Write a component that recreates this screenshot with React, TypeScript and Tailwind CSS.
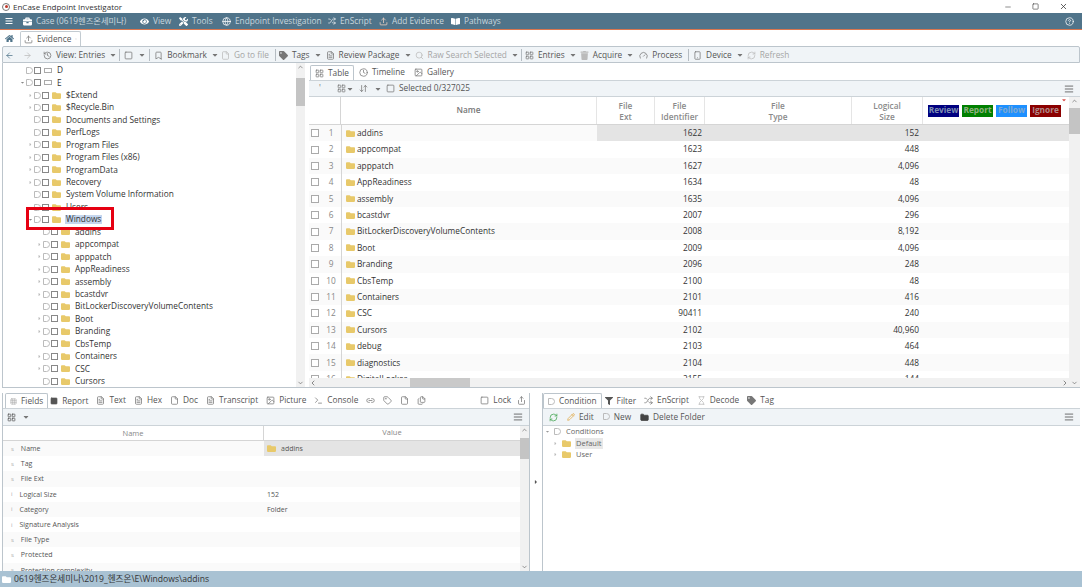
import {
  AlignJustify, ArrowLeft, ArrowRight, Bookmark, ArrowDownUp, ChevronDown, ChevronLeft, ChevronRight, ChevronUp,
  Clock, CircleHelp, File, FileText, Folder, Gauge, Grid3x3, History, Image, LayoutGrid, Minus,
  Pencil, RefreshCw, Search, Square, Tag, Terminal, X, Globe, Smartphone, Upload, Shuffle, Hourglass, Link2, Files, Share,
} from "lucide-react";
import { FaFolder, FaHome, FaTag, FaBars, FaCaretDown, FaCaretRight, FaBookOpen, FaEye, FaTools, FaBriefcase, FaFilter, FaTrash } from "react-icons/fa";

const font = "font-['Open_Sans','Noto_Sans_CJK_KR',sans-serif]";

const tree: [string, number, boolean?][] = [
  ["D", 0], ["E", 0], ["$Extend", 1], ["$Recycle.Bin", 1], ["Documents and Settings", 1], ["PerfLogs", 1],
  ["Program Files", 1], ["Program Files (x86)", 1], ["ProgramData", 1], ["Recovery", 1], ["System Volume Information", 1],
  ["Users", 1], ["Windows", 1, true], ["addins", 2], ["appcompat", 2], ["apppatch", 2], ["AppReadiness", 2], ["assembly", 2],
  ["bcastdvr", 2], ["BitLockerDiscoveryVolumeContents", 2], ["Boot", 2], ["Branding", 2], ["CbsTemp", 2], ["Containers", 2],
  ["CSC", 2], ["Cursors", 2],
];

// rows of the tree that have an expander in front of them
const closed = ["$Extend", "$Recycle.Bin", "Program Files", "Program Files (x86)", "ProgramData", "Recovery", "appcompat", "apppatch", "AppReadiness", "assembly", "bcastdvr", "Boot", "Branding", "Containers", "CSC"];
const open = ["E", "Windows"];

const rows: [string, string, string][] = [
  ["addins", "1622", "152"], ["appcompat", "1623", "448"], ["apppatch", "1627", "4,096"], ["AppReadiness", "1634", "48"],
  ["assembly", "1635", "4,096"], ["bcastdvr", "2007", "296"], ["BitLockerDiscoveryVolumeContents", "2008", "8,192"],
  ["Boot", "2009", "4,096"], ["Branding", "2096", "248"], ["CbsTemp", "2100", "48"], ["Containers", "2101", "416"],
  ["CSC", "90411", "240"], ["Cursors", "2102", "40,960"], ["debug", "2103", "464"], ["diagnostics", "2104", "448"],
  ["DigitalLocker", "2155", "144"],
];

const fields: [string, string][] = [
  ["Name", "addins"], ["Tag", ""], ["File Ext", ""], ["Logical Size", "152"], ["Category", "Folder"],
  ["Signature Analysis", ""], ["File Type", ""], ["Protected", ""], ["Protection complexity", ""],
];

function Yellow() {
  return <FaFolder className="w-[9px] h-[9px] text-[#e8c96a] shrink-0" />;
}

function Box() {
  return <span className="w-[7px] h-[7px] border border-[#888] bg-white shrink-0" />;
}

function Drive() {
  return <span className="w-[7px] h-[7px] rounded-r-full border border-[#bbb] shrink-0" />;
}

function Caret({ className = "" }: { className?: string }) {
  return <FaCaretDown className={`w-[8px] h-[8px] text-[#777] shrink-0 ${className}`} />;
}

function Sep({ className = "" }: { className?: string }) {
  return <span className={`w-px h-[12px] bg-[#b5bcc2] shrink-0 ${className}`} />;
}

function NavItem({ icon, label, w }: { icon: React.ReactNode; label: string; w: string }) {
  return (
    <span className={`flex items-center gap-[4px] shrink-0 ${w}`}>
      {icon}
      <span className="whitespace-nowrap">{label}</span>
    </span>
  );
}

function Tool({ icon, label, off, caret, className = "" }: { icon: React.ReactNode; label: string; off?: boolean; caret?: boolean; className?: string }) {
  return (
    <span className={`flex items-center gap-[4px] whitespace-nowrap shrink-0 ${off ? "text-[#a5a5a5]" : "text-[#555]"} ${className}`}>
      {icon}
      {label}
      {caret && <Caret />}
    </span>
  );
}

function TreeRow({ label, depth, picked }: { label: string; depth: number; picked?: boolean }) {
  const drive = depth === 0;
  return (
    <div className={`relative h-[12.45px] flex items-center gap-[1px] shrink-0 whitespace-nowrap ${depth === 0 ? "pl-[23px]" : depth === 1 ? "pl-[31px]" : "pl-[40px]"}`}>
      {closed.includes(label) && <FaCaretRight className="w-[5px] h-[5px] text-[#bbb] -ml-[6px] shrink-0" />}
      {open.includes(label) && <FaCaretDown className="w-[5px] h-[5px] text-[#888] -ml-[6px] shrink-0" />}
      <Drive />
      <Box />
      <span className="w-px" />
      {drive ? <span className="w-[8px] h-[5px] border border-[#aaa] shrink-0" /> : <Yellow />}
      <span className={`ml-[3px] px-[1px] text-[#333] ${picked ? "bg-[#c5d6ee]" : ""}`}>{label}</span>
    </div>
  );
}

function Bar({ thumb, w = "w-[9px]" }: { thumb: string; w?: string }) {
  return (
    <div className={`${w} shrink-0 bg-[#f1f1f1] flex flex-col items-center`}>
      <ChevronUp className="w-[7px] h-[8px] text-[#555] shrink-0" />
      <div className={`w-full bg-[#c4c4c4] ${thumb}`} />
      <div className="flex-1" />
      <ChevronDown className="w-[7px] h-[8px] text-[#555] shrink-0" />
    </div>
  );
}

function Tab({ label, icon, on }: { label: string; icon: React.ReactNode; on?: boolean }) {
  return (
    <span className={`flex items-center gap-[4px] h-[15px] px-[4px] whitespace-nowrap shrink-0 text-[#555] ${on ? "border border-b-0 border-[#bcc5cc] rounded-t-[2px] bg-white" : ""}`}>
      {icon}
      {label}
    </span>
  );
}

const smIcon = "w-[9px] h-[9px] text-[#777] shrink-0";
const offIcon = "w-[9px] h-[9px] text-[#bbb] shrink-0";

export default function App() {
  return (
    <div className={`w-[1082px] h-[587px] overflow-hidden bg-white flex flex-col text-[8.3px] leading-none ${font}`}>
      {/* title bar */}
      <div className="h-[13px] flex items-center pl-[2px] pr-[14px] text-[#333] text-[8px] shrink-0">
        <span className="w-[8px] h-[8px] rounded-full border border-[#777] mr-[3px] flex items-center justify-center">
          <span className="w-[3px] h-[3px] rounded-full bg-[#c0392b]" />
        </span>
        EnCase Endpoint Investigator
        <span className="flex-1" />
        <Minus className="w-[8px] h-[8px] text-[#555] mr-[20px]" />
        <Square className="w-[7px] h-[7px] text-[#333] mr-[20px]" />
        <X className="w-[9px] h-[9px] text-[#333]" />
      </div>

      {/* nav */}
      <div className="h-[17px] bg-[#50748a] border-b border-[#d9764f] flex items-center pl-[5px] pr-[8px] text-[#c9d6de] shrink-0">
        <FaBars className="w-[8px] h-[8px] text-white mr-[10px]" />
        <NavItem w="w-[117px]" icon={<FaBriefcase className="w-[9px] h-[9px] text-white" />} label="Case (0619헨즈온세미나)" />
        <NavItem w="w-[39px]" icon={<FaEye className="w-[9px] h-[9px] text-white" />} label="View" />
        <NavItem w="w-[43px]" icon={<FaTools className="w-[9px] h-[9px] text-white" />} label="Tools" />
        <NavItem w="w-[106px]" icon={<Globe className="w-[9px] h-[9px] text-white" />} label="Endpoint Investigation" />
        <NavItem w="w-[51px]" icon={<Shuffle className="w-[8px] h-[8px] text-white" />} label="EnScript" />
        <NavItem w="w-[72px]" icon={<Upload className="w-[9px] h-[9px] text-[#f1d4c4]" />} label="Add Evidence" />
        <NavItem w="w-[60px]" icon={<FaBookOpen className="w-[9px] h-[9px] text-white" />} label="Pathways" />
        <span className="flex-1" />
        <CircleHelp className="w-[9px] h-[9px] text-white" />
      </div>

      {/* page tabs */}
      <div className="h-[16px] flex items-end pl-[5px] gap-[6px] shrink-0 text-[#555]">
        <FaHome className="w-[9px] h-[9px] text-[#50748a] mb-[3px]" />
        <span className="h-[15px] w-[61px] border border-b-0 border-[#c3cbd1] rounded-t-[2px] flex items-center gap-[4px] px-[3px]">
          <Upload className={smIcon} />
          Evidence
          <X className="w-[6px] h-[6px] text-[#777] ml-auto" />
        </span>
      </div>

      {/* toolbar */}
      <div className="h-[17px] mx-[2px] border border-[#bcc5cc] rounded-t-[2px] bg-[#f0f4f7] flex items-center pl-[2px] pt-[1px] shrink-0">
        <ArrowLeft className="w-[9px] h-[9px] text-[#50748a] shrink-0" />
        <ArrowRight className="w-[9px] h-[9px] text-[#bbb] ml-[9px] shrink-0" />
        <Tool className="ml-[11px]" icon={<History className={smIcon} />} label="View: Entries" caret />
        <Sep className="ml-[2px]" />
        <Square className={`${smIcon} ml-[4px]`} />
        <Caret className="ml-[5px]" />
        <Sep className="ml-[3px]" />
        <Tool className="ml-[4px]" icon={<Bookmark className={smIcon} />} label="Bookmark" caret />
        <Tool className="ml-[2px]" off icon={<File className={offIcon} />} label="Go to file" />
        <Sep className="ml-[6px]" />
        <Tool className="ml-[3px]" icon={<FaTag className={smIcon} />} label="Tags" caret />
        <Tool className="ml-[4px]" icon={<FileText className={smIcon} />} label="Review Package" caret />
        <Tool className="ml-[3px]" off icon={<Search className={offIcon} />} label="Raw Search Selected" caret />
        <Sep className="ml-[2px]" />
        <Tool className="ml-[3px]" icon={<LayoutGrid className={smIcon} />} label="Entries" caret />
        <Tool className="ml-[3px]" icon={<FaTrash className={offIcon} />} label="Acquire" caret />
        <Tool className="ml-[5px]" icon={<Gauge className={smIcon} />} label="Process" />
        <Sep className="ml-[6px]" />
        <Tool className="ml-[4px]" icon={<Smartphone className={smIcon} />} label="Device" caret />
        <Tool className="ml-[3px]" off icon={<RefreshCw className={offIcon} />} label="Refresh" />
      </div>

      {/* upper panes */}
      <div className="h-[325px] flex mx-[2px] gap-[4px] shrink-0 border-b border-[#bcc5cc]">
        <div className="relative w-[303px] flex border-l border-[#bcc5cc] overflow-hidden shrink-0">
          <div className="flex-1 flex flex-col pt-[1px] overflow-hidden text-[#333]">
            {tree.map(([label, depth, picked]) => (
              <TreeRow key={label} label={label} depth={depth} picked={picked} />
            ))}
          </div>
          <Bar thumb="mt-[7px] h-[28px]" />
          <div className="absolute left-[23px] top-[144px] w-[88px] h-[23px] border-[3px] border-[#e60012]" />
        </div>

        <div className="flex-1 min-w-0 flex flex-col">
          <div className="h-[17px] flex items-end pl-[1px] gap-[1px] shrink-0">
            <Tab on label="Table" icon={<LayoutGrid className={smIcon} />} />
            <Tab label="Timeline" icon={<Clock className={smIcon} />} />
            <Tab label="Gallery" icon={<Image className={smIcon} />} />
          </div>
          <div className="h-[17px] bg-[#f0f4f7] border-y border-[#ccd3d8] flex items-center pl-[10px] pr-[6px] shrink-0 text-[#555]">
            <span className="w-[18px] text-[#777]">'</span>
            <LayoutGrid className={smIcon} />
            <Caret />
            <ArrowDownUp className={`${smIcon} ml-[5px]`} />
            <Caret className="ml-[6px]" />
            <Square className={`${smIcon} ml-[4px]`} />
            <span className="ml-[4px]">Selected 0/327025</span>
            <AlignJustify className="w-[10px] h-[10px] text-[#555] ml-auto" />
          </div>
          <div className="flex-1 min-h-0 flex">
            <div className="flex-1 min-w-0 flex flex-col overflow-hidden">
              <div className="relative h-[28px] flex shrink-0 border-b border-[#d5d5d5] text-[#8a8a8a] font-semibold text-center">
                <span className="w-[32px] border-r border-[#d5d5d5]" />
                <span className="w-[256px] border-r border-[#e5e5e5] flex items-center justify-center text-[#777]">Name</span>
                <span className="w-[58px] border-r border-[#e5e5e5] flex items-center justify-center leading-[11px]">File<br />Ext</span>
                <span className="w-[50px] border-r border-[#e5e5e5] flex items-center justify-center leading-[11px]">File<br />Identifier</span>
                <span className="w-[147px] border-r border-[#e5e5e5] flex items-center justify-center leading-[11px]">File<br />Type</span>
                <span className="w-[71px] border-r border-[#e5e5e5] flex items-center justify-center leading-[11px]">Logical<br />Size</span>
                <span className="flex-1 flex items-center gap-[3px] pl-[5px] font-bold">
                  <span className="w-[31px] h-[12px] bg-[#000080] text-[#7f8fb0] flex items-center justify-center">Review</span>
                  <span className="w-[31px] h-[12px] bg-[#008000] text-[#8fb07f] flex items-center justify-center">Report</span>
                  <span className="w-[31px] h-[12px] bg-[#1e90ff] text-[#7fa9d0] flex items-center justify-center">Follow</span>
                  <span className="w-[31px] h-[12px] bg-[#8b0000] text-[#b08a8a] flex items-center justify-center">Ignore</span>
                </span>
                <FaCaretDown className="absolute right-[2px] top-0 w-[6px] h-[6px] text-[#d9534f]" />
              </div>
              <div className="flex-1 min-h-0 overflow-hidden">
                {rows.map(([name, id, size], i) => (
                  <div key={name} className={`h-[16.4px] flex items-center text-[#333] ${i % 2 === 0 ? "bg-[#fafafa]" : "bg-white"}`}>
                    <span className="w-[15px] pl-[2px] flex shrink-0"><span className="w-[8px] h-[8px] border border-[#aaa] bg-white" /></span>
                    <span className="w-[17px] pr-[3px] text-center text-[#888] shrink-0">{i + 1}</span>
                    <span className="w-[256px] h-full flex items-center gap-[2px] pl-[4px] border-l border-[#d5d5d5] shrink-0"><Yellow />{name}</span>
                    <span className={`flex-1 h-full flex items-center ${i === 0 ? "bg-[#e4e4e4]" : ""}`}>
                      <span className="w-[58px]" />
                      <span className="w-[50px] text-right pr-[3px]">{id}</span>
                      <span className="w-[147px]" />
                      <span className="w-[67px] text-right">{size}</span>
                    </span>
                  </div>
                ))}
              </div>
              <div className="h-[9px] shrink-0 bg-[#f1f1f1] flex items-center">
                <ChevronLeft className="w-[8px] h-[8px] text-[#555] shrink-0" />
                <span className="w-[60px] h-full bg-[#c9c9c9] ml-[93px]" />
                <span className="flex-1" />
                <ChevronRight className="w-[8px] h-[8px] text-[#555] shrink-0" />
              </div>
            </div>
            <Bar thumb="mt-[3px] h-[26px]" w="w-[11px]" />
          </div>
        </div>
      </div>

      {/* lower panes */}
      <div className="flex-1 min-h-0 flex mx-[2px] pt-[5px]">
        <div className="w-[528px] flex flex-col border-x border-[#bcc5cc] shrink-0">
          <div className="h-[15px] flex items-end gap-[8px] shrink-0 pl-[2px] pr-[3px]">
            <Tab on label="Fields" icon={<Grid3x3 className="w-[7px] h-[7px] text-[#aaa]" />} />
            <Tool className="-ml-[6px] pb-[3px]" icon={<Square className="w-[8px] h-[8px] text-[#555] fill-[#555]" />} label="Report" />
            <Tool className="pb-[3px]" icon={<FileText className={smIcon} />} label="Text" />
            <Tool className="pb-[3px]" icon={<FileText className={smIcon} />} label="Hex" />
            <Tool className="pb-[3px]" icon={<File className={smIcon} />} label="Doc" />
            <Tool className="pb-[3px]" icon={<FileText className={smIcon} />} label="Transcript" />
            <Tool className="pb-[3px]" icon={<Image className={smIcon} />} label="Picture" />
            <Tool className="pb-[3px]" icon={<Terminal className={smIcon} />} label="Console" />
            <Link2 className={`${smIcon} mb-[3px]`} />
            <Tag className={`${smIcon} mb-[3px]`} />
            <File className={`${smIcon} mb-[3px]`} />
            <Files className={`${smIcon} mb-[3px]`} />
            <span className="flex-1" />
            <Tool className="pb-[3px]" icon={<Square className={smIcon} />} label="Lock" />
            <Share className={`${smIcon} mb-[3px] -ml-[2px]`} />
          </div>
          <div className="h-[18px] bg-[#f0f4f7] border-y border-[#ccd3d8] flex items-center pl-[4px] pr-[6px] gap-[6px] shrink-0">
            <LayoutGrid className="w-[9px] h-[9px] text-[#555]" />
            <Caret />
            <AlignJustify className="w-[10px] h-[10px] text-[#555] ml-auto" />
          </div>
          <div className="flex-1 min-h-0 flex">
            <div className="flex-1 min-w-0 overflow-hidden">
              <div className="h-[15px] flex items-center border-b border-[#d5d5d5] text-[#888] text-center text-[7.5px]">
                <span className="w-[261px] border-r border-[#d5d5d5] leading-[14px]">Name</span>
                <span className="flex-1">Value</span>
              </div>
              {fields.map(([k, v], i) => (
                <div key={k} className={`h-[15.2px] flex items-center text-[7px] text-[#555] ${i % 2 === 0 ? "bg-[#fafafa]" : "bg-white"}`}>
                  <span className="w-[261px] pl-[8px] flex items-center gap-[7px] h-full shrink-0">
                    <span className="text-[6px] text-[#aaa]">{i === 3 || i === 4 || i === 5 ? "i" : "s"}</span>
                    {k}
                  </span>
                  <span className={`flex-1 h-full flex items-center gap-[5px] pl-[3px] ${i === 0 ? "bg-[#e4e4e4]" : ""}`}>
                    {i === 0 && <Yellow />}
                    {v}
                  </span>
                </div>
              ))}
            </div>
            <Bar thumb="mt-[4px] h-[21px]" />
          </div>
        </div>

        <div className="w-[12px] flex items-center justify-center shrink-0">
          <FaCaretRight className="w-[6px] h-[6px] text-[#555]" />
        </div>

        <div className="flex-1 min-w-0 flex flex-col border-l border-[#bcc5cc]">
          <div className="h-[15px] flex items-end gap-[8px] shrink-0">
            <Tab on label="Condition" icon={<Drive />} />
            <Tool className="-ml-[5px] pb-[3px]" icon={<FaFilter className="w-[8px] h-[8px] text-[#555]" />} label="Filter" />
            <Tool className="pb-[3px]" icon={<Shuffle className={smIcon} />} label="EnScript" />
            <Tool className="pb-[3px]" icon={<Hourglass className={offIcon} />} label="Decode" />
            <Tool className="pb-[3px]" icon={<FaTag className={smIcon} />} label="Tag" />
          </div>
          <div className="h-[18px] bg-[#f0f4f7] border-y border-[#ccd3d8] flex items-center pl-[6px] pr-[6px] gap-[9px] shrink-0 text-[#555]">
            <RefreshCw className="w-[9px] h-[9px] text-[#3fa34d]" />
            <Tool icon={<Pencil className="w-[8px] h-[8px] text-[#e0a030]" />} label="Edit" />
            <Tool icon={<Drive />} label="New" />
            <Tool icon={<Folder className="w-[9px] h-[9px] text-[#444] fill-[#444]" />} label="Delete Folder" />
            <AlignJustify className="w-[10px] h-[10px] text-[#555] ml-auto" />
          </div>
          <div className="pl-[2px] text-[7.5px] text-[#666] flex flex-col">
            <div className="h-[11.5px] flex items-center gap-[4px]">
              <FaCaretDown className="w-[5px] h-[5px] text-[#999]" />
              <Drive />
              <span className="ml-[1px]">Conditions</span>
            </div>
            <div className="h-[11.5px] flex items-center gap-[4px] pl-[8px]">
              <FaCaretRight className="w-[5px] h-[5px] text-[#bbb]" />
              <Yellow />
              <span className="bg-[#e8e8e8] px-[1px] h-full flex items-center">Default</span>
            </div>
            <div className="h-[11.5px] flex items-center gap-[4px] pl-[8px]">
              <FaCaretRight className="w-[5px] h-[5px] text-[#bbb]" />
              <Yellow />
              <span className="px-[1px]">User</span>
            </div>
          </div>
        </div>
      </div>

      {/* status */}
      <div className="h-[16px] bg-[#a9c2d3] flex items-center gap-[3px] pl-[2px] text-[8.6px] text-[#333] shrink-0">
        <FaFolder className="w-[9px] h-[9px] text-white" />
        <span>0619헨즈온세미나\2019_헨즈온\E\Windows\addins</span>
      </div>
    </div>
  );
}
